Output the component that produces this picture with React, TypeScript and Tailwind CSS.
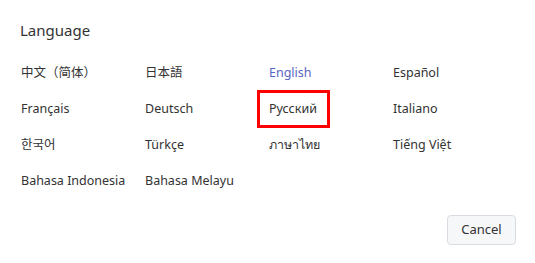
import React from 'react';

const RUSSIAN = '\u0420\u0443\u0441\u0441\u043a\u0438\u0439';

const languages = [
  '\u4e2d\u6587\uff08\u7b80\u4f53\uff09',
  '\u65e5\u672c\u8a9e',
  'English',
  'Espa\u00f1ol',
  'Fran\u00e7ais',
  'Deutsch',
  RUSSIAN,
  'Italiano',
  '\ud55c\uad6d\uc5b4',
  'T\u00fcrk\u00e7e',
  '\u0e20\u0e32\u0e29\u0e32\u0e44\u0e17\u0e22',
  'Ti\u1ebfng Vi\u1ec7t',
  'Bahasa Indonesia',
  'Bahasa Melayu',
];

function App() {
  return (
    <div
      className="w-[535px] h-[263px] bg-white pt-5 pl-5 pr-[19px] text-[#333333]"
      style={{ fontFamily: '"Noto Sans", "Noto Sans CJK SC", sans-serif' }}
    >
      <div className="text-[15px] leading-5">Language</div>
      <div className="mt-[15px] grid grid-cols-[repeat(4,124px)] auto-rows-[36px] text-[12.5px]">
        {languages.map((lang) => (
          <div key={lang} className="flex items-center">
            <span
              className={`relative pl-px cursor-pointer ${
                lang === 'English' ? 'text-[#5865c4]' : ''
              }`}
            >
              {lang}
              {lang === RUSSIAN && (
                <span className="absolute -left-[11px] w-[73px] top-[-10px] bottom-[-10px] border-[3px] border-[#ff0000]" />
              )}
            </span>
          </div>
        ))}
      </div>
      <div className="mt-4 flex justify-end">
        <button className="w-[69px] h-[30px] rounded border border-[#d9dde3] bg-[#f6f7f9] text-[13px] text-[#333333]">
          Cancel
        </button>
      </div>
    </div>
  );
}

export default App;
